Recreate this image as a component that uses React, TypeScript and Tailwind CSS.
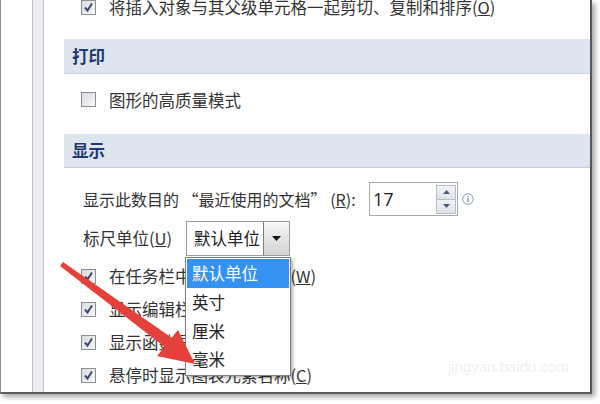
import React from 'react';

const font = { fontFamily: '"Noto Sans CJK SC", "Noto Sans", sans-serif' };

// checkbox in the Office 2010 look
const CheckBox: React.FC<{ checked?: boolean }> = ({ checked }) => (
  <span className="flex h-[15px] w-[15px] shrink-0 items-center justify-center border border-[#8d8e91] bg-linear-to-br from-[#d9dce3] to-[#f7f7f9]">
    {checked && (
      <svg width="11" height="11" viewBox="0 0 11 11">
        <path d="M2 5.5 L4.5 8.5 L9 1.5" stroke="#3a4a6c" strokeWidth="2" fill="none" />
      </svg>
    )}
  </span>
);

const CheckRow: React.FC<{ checked?: boolean; className?: string; children: React.ReactNode }> = ({
  checked,
  className,
  children,
}) => (
  <div className={`flex items-center gap-[13px] pl-[17px] ${className ?? ''}`}>
    <CheckBox checked={checked} />
    <span className="whitespace-nowrap">{children}</span>
  </div>
);

const SectionHeader: React.FC<{ title: string; className?: string }> = ({ title, className }) => (
  <div
    className={`flex items-center border-b border-[#c8d0dc] bg-[#dfe5ee] pl-[8px] text-[16.5px] font-bold text-[#1e3a72] ${className ?? ''}`}
  >
    {title}
  </div>
);

export default function App() {
  return (
    <div className="relative h-[404px] w-[600px] overflow-hidden bg-white text-[16.5px] text-[#333]" style={font}>
      {/* window frame */}
      <div className="flex h-[394px] w-[592px] overflow-hidden border-b-2 border-l border-r-2 border-b-[#5c5c5c] border-l-[#8a8a8a] border-r-[#575757] bg-white shadow-[3px_3px_5px_rgba(0,0,0,0.35)]">
        <div className="w-[31px] shrink-0" />
        <div className="w-[12px] shrink-0 border-x border-[#c3c3c8] bg-[#ececf0]" />

        <div className="flex flex-1 flex-col pl-[20px]">
          <CheckRow checked className="-mt-[5px] h-[24px]">
            将插入对象与其父级单元格一起剪切、复制和排序(<u>O</u>)
          </CheckRow>

          <SectionHeader title="打印" className="mt-[20px] h-[36px]" />

          <CheckRow className="mt-[14px] h-[24px]">图形的高质量模式</CheckRow>

          <SectionHeader title="显示" className="mt-[22px] h-[35px]" />

          {/* recent documents count */}
          <div className="mt-[14px] flex h-[34px] items-center pl-[19px]">
            <span className="w-[286px] whitespace-nowrap text-[16px]">
              显示此数目的 “最近使用的文档” (<u>R</u>):
            </span>
            <div className="flex h-[34px] w-[89px] items-center justify-between border border-[#a9a9a9] pl-[3px] pr-[1px]">
              <span className="text-[18px] text-[#222]" style={{ fontFamily: '"Open Sans", sans-serif' }}>
                17
              </span>
              <div className="flex flex-col">
                <div className="flex h-[15px] w-[20px] items-center justify-center border border-[#b8bdc7] bg-linear-to-b from-[#f1f3f7] to-[#dde2ea]">
                  <svg width="7" height="4" viewBox="0 0 7 4">
                    <path d="M0 4 L3.5 0 L7 4 Z" fill="#4b5b7b" />
                  </svg>
                </div>
                <div className="-mt-px flex h-[15px] w-[20px] items-center justify-center border border-[#b8bdc7] bg-linear-to-b from-[#f1f3f7] to-[#dde2ea]">
                  <svg width="7" height="4" viewBox="0 0 7 4">
                    <path d="M0 0 L3.5 4 L7 0 Z" fill="#4b5b7b" />
                  </svg>
                </div>
              </div>
            </div>
            <svg className="ml-[4px]" width="12" height="12" viewBox="0 0 12 12">
              <circle cx="6" cy="6" r="5.3" fill="none" stroke="#8b9db3" strokeWidth="1" />
              <rect x="5.4" y="5" width="1.2" height="4" fill="#6f84a0" />
              <rect x="5.4" y="3" width="1.2" height="1.2" fill="#6f84a0" />
            </svg>
          </div>

          {/* ruler units */}
          <div className="mt-[5px] flex h-[35px] items-center pl-[19px]">
            <span className="w-[103px] whitespace-nowrap">
              标尺单位(<u>U</u>)
            </span>
            <div className="relative flex h-[35px] w-[104px] border border-[#9c9c9c] bg-white">
              <span className="flex flex-1 items-center pl-[7px] text-[#222]">默认单位</span>
              <div className="flex w-[26px] items-center justify-center border-l border-[#7d7d7d] bg-linear-to-b from-[#f6f6f6] to-[#d3d3d3]">
                <svg width="9" height="5" viewBox="0 0 9 5">
                  <path d="M0 0 L9 0 L4.5 5 Z" fill="#111" />
                </svg>
              </div>

              {/* open list */}
              <div className="absolute -left-[2px] top-[35px] z-10 flex h-[119px] w-[106px] flex-col border border-[#808080] bg-white p-px shadow-[2px_2px_3px_rgba(0,0,0,0.3)]">
                <div className="flex h-[30px] items-center bg-[#3592f3] pl-[5px] text-white">默认单位</div>
                <div className="flex h-[29px] items-center pl-[5px] text-[#222]">英寸</div>
                <div className="flex h-[29px] items-center pl-[5px] text-[#222]">厘米</div>
                <div className="flex h-[29px] items-center pl-[5px] text-[#222]">毫米</div>
              </div>
            </div>
          </div>

          <div className="mt-[4px] flex flex-col">
            <CheckRow checked className="h-[33px]">
              在任务栏中显示所有窗口(<u>W</u>)
            </CheckRow>
            <CheckRow checked className="h-[33px]">
              显示编辑栏(<u>F</u>)
            </CheckRow>
            <CheckRow checked className="h-[33px]">
              显示函数屏幕提示(<u>F</u>)
            </CheckRow>
            <CheckRow checked className="h-[33px]">
              悬停时显示图表元素名称(<u>C</u>)
            </CheckRow>
          </div>
        </div>
      </div>

      {/* faint watermark */}
      <span
        className="absolute left-[448px] top-[356px] text-[15px] text-[#f1f1f1]"
        style={{ fontFamily: '"Liberation Sans", sans-serif' }}
      >
        jingyan.baidu.com
      </span>

      {/* red annotation arrow */}
      <svg className="pointer-events-none absolute left-0 top-0 z-20" width="600" height="404" viewBox="0 0 600 404">
        <polygon points="60,266 63,262 172,338 166,348" fill="#e5403a" />
        <polygon points="195,364 157,356 178,330" fill="#e5403a" />
      </svg>
    </div>
  );
}
